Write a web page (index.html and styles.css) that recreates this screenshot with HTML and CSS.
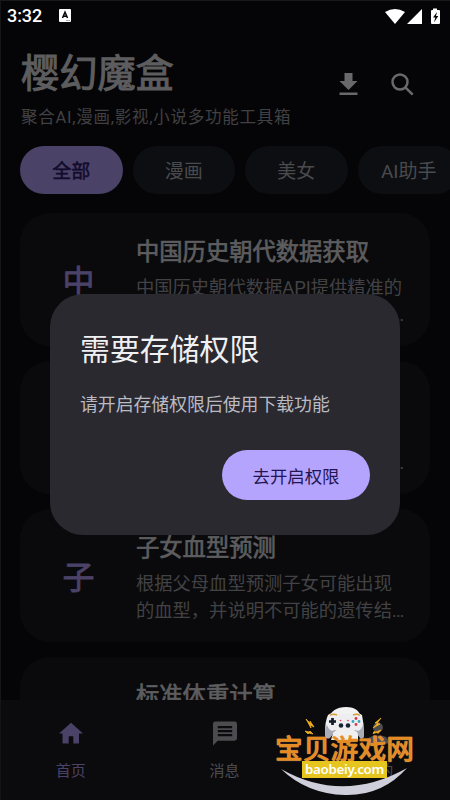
FILE: index.html
```html
<!DOCTYPE html>
<html lang="zh-CN">
<head>
<meta charset="utf-8">
<title>樱幻魔盒</title>
<link rel="stylesheet" href="styles.css">
</head>
<body>
<div class="screen">
  <div class="status">
    <span class="time">3:32</span>
    <svg class="ime" viewBox="0 0 12 13"><rect width="12" height="13" rx="1" fill="#fff"/><path d="M3.5 9 6 3.2 8.5 9M4.5 7.2h3" fill="none" stroke="#050507" stroke-width="1.5"/><path d="M7 11.5h4" stroke="#999" stroke-width=".8"/></svg>
    <svg class="signals" viewBox="0 0 58 18"><path d="M0 5Q10-1 20 5L10 17ZM22 17 37 2V17ZM48 1.500h4V3h2q1 0 1 1v12q0 1-1 1h-7q-1 0-1-1V4q0-1 1-1h1Z" fill="#fff"/><path d="M52 5 48 10.500h2.300L49 15.500 53.300 9H51Z" fill="#050507"/></svg>
  </div>
  <header class="header">
    <div>
      <h1 class="app-title">樱幻魔盒</h1>
      <p class="subtitle">聚合AI,漫画,影视,小说多功能工具箱</p>
    </div>
    <div class="actions">
      <svg viewBox="0 0 24 24"><path d="M7.500 0h8v7.900h5L11.500 17l-9-9.100h5ZM2.500 19.500h18v2.500h-18Z"/></svg>
      <svg viewBox="0 0 24 24"><circle cx="9" cy="9" r="7.500"/><path class="handle" d="m14.300 14.300 7.400 7.400"/></svg>
    </div>
  </header>
  <nav class="chips">
    <span class="chip active">全部</span><span class="chip">漫画</span><span class="chip">美女</span><span class="chip">AI助手</span>
  </nav>
  <main class="list">
    <article class="card">
      <div class="letter">中</div>
      <div class="info"><h2>中国历史朝代数据获取</h2><p>中国历史朝代数据API提供精准的</p><p class="more">…</p></div>
    </article>
    <article class="card">
      <div class="letter"></div>
      <div class="info"><h2>&nbsp;</h2><p>&nbsp;</p><p class="more">…</p></div>
    </article>
    <article class="card">
      <div class="letter">子</div>
      <div class="info"><h2>子女血型预测</h2><p>根据父母血型预测子女可能出现</p><p>的血型，并说明不可能的遗传结…</p></div>
    </article>
    <article class="card">
      <div class="letter"></div>
      <div class="info"><h2>标准体重计算</h2></div>
    </article>
  </main>
  <footer class="tabs">
    <div class="tab on"><svg viewBox="0 0 24 24"><path d="M9.700 22v-7.300h4.600V22h5.700V12h4L12 1.300 0 12h3.500v10Z"/></svg>首页</div>
    <div class="tab"><svg viewBox="0 0 24 24"><path fill-rule="evenodd" d="M0 2.400Q0 0 2.400 0h19.200Q24 0 24 2.400v14.400q0 2.400-2.400 2.400H4.800L0 24ZM4.800 4.400v2.300h14.400V4.400ZM4.800 8.400v2.300h14.400V8.400ZM4.800 12.400v2.300h14.400v-2.300Z"/></svg>消息</div>
    <div class="tab"><svg viewBox="0 0 24 24"><circle cx="12" cy="6" r="5"/><path d="M2 22v-3q0-5 10-5t10 5v3Z"/></svg>我的</div>
  </footer>

  <section class="dialog">
    <h3>需要存储权限</h3>
    <p>请开启存储权限后使用下载功能</p>
    <button>去开启权限</button>
  </section>

  <div class="watermark">
    <svg viewBox="0 0 170 100">
      <path d="M21 69Q83 104 147 68 122 96 85 95 47 94 21 69Z" fill="#cfcfdb"/>
      <path d="M68 19Q72 7 86 7t15 12Z" fill="#f3f2f2"/>
      <path d="M68 15Q71 12 77 14h16q6-2 9 1 2 9 2 19 0 5-4 3l-5-7H75l-5 7q-5 2-5-4 0-12 3-18Z" fill="#eeeef1"/>
      <path d="M65 34q0-6 2-9 3 8 8 5h20q5 3 8-5 1 6 1 10 0 5-4 3l-5-7H75l-5 7q-5 2-5-4Z" fill="#a9abb7"/>
      <path d="M73 33q2-3 4-3h16q3 0 5 4v6H71Z" fill="#f1f0f1"/>
      <path d="M70 15.500q3-2 7-.5M93 15q4-1.500 7 .5" stroke="#d89f35" stroke-width="1.500" fill="none"/>
      <path d="M72.500 18v7M69 21.500h7" stroke="#111a27" stroke-width="2.700"/>
      <circle cx="81" cy="25.500" r="2.300" fill="#172332"/><circle cx="88" cy="25.500" r="2.300" fill="#172332"/>
      <g fill="#da3549"><circle cx="96" cy="18.500" r="1.400"/><circle cx="96" cy="24.500" r="1.400"/><circle cx="80.500" cy="20.500" r=".8"/><circle cx="88" cy="20.500" r=".8"/></g>
      <g fill="#35a6bd"><circle cx="93" cy="21.500" r="1.400"/><circle cx="99" cy="21.500" r="1.400"/></g>
      <path d="m46 19 5 5-1-3 4 6-4-2 1 3ZM45 31l4 1 1-1 3 3-4-1-1 1ZM121 18l-6 5 3 0-5 5 7-4-3-.5ZM121 30l-5 2-2-.500-1 2 4-1 1 1Z" fill="#f0ae22" stroke="#f0ae22" stroke-width=".8"/>
    </svg>
    <strong class="brand">宝贝游戏网</strong>
    <span class="url">baobeiy.com</span>
  </div>
</div>
</body>
</html>
```
FILE: styles.css
```css
* { box-sizing: border-box; margin: 0; padding: 0; }
body { background: #050507; font-family: Roboto, "Noto Sans CJK SC", sans-serif; }
.screen { position: relative; display: flex; flex-direction: column; width: 450px; height: 800px; overflow: hidden; background: #050507; border-left: 1px solid #151518; border-top: 1px solid #17191b; }
.status { display: flex; align-items: center; height: 29px; padding: 0 8px 0 6px; color: #fff; }
.time { width: 52px; font-size: 18px; font-weight: 500; letter-spacing: -.1px; }
.ime { width: 12px; height: 13px; }
.signals { width: 58px; height: 18px; margin-left: auto; margin-right: -1px; }
.header { display: flex; justify-content: space-between; height: 116px; padding: 17px 35px 0 20px; }
.app-title { height: 54px; line-height: 54px; font-size: 38.200px; font-weight: 400; color: #5d5d5f; -webkit-text-stroke: 1px #5d5d5f; }
.subtitle { height: 34px; line-height: 34px; font-size: 16.500px; letter-spacing: .75px; color: #414144; }
.actions { display: flex; gap: 30px; padding-top: 26px; }
.actions svg { width: 24px; height: 24px; fill: #69696b; }
.actions circle, .actions .handle { fill: none; stroke: #69696b; stroke-width: 2.500; }
.chips { display: flex; flex: none; gap: 10px; margin-left: 19px; }
.chip { flex: none; width: 102.500px; height: 48px; line-height: 51px; border-radius: 24px; text-align: center; background: #0c0e12; color: #4a4a4d; font-size: 19px; }
.chip.active { background: #4b4267; color: #110b2d; -webkit-text-stroke: .5px #110b2d; }
.list { display: flex; flex: 1; min-height: 0; flex-direction: column; gap: 15.500px; margin: 19px 20px 0 19px; overflow: hidden; }
.card { display: flex; flex: none; height: 132.500px; border-radius: 30px; background: #0a0a0c; }
.letter { width: 116px; padding: 46px 0 0 1px; text-align: center; line-height: 46px; font-size: 32px; color: #4b4267; -webkit-text-stroke: .8px #4b4267; }
.info { width: 270px; padding-top: 22px; white-space: nowrap; }
.info h2 { height: 39px; line-height: 35px; font-size: 23.300px; font-weight: 400; color: #5d5d5f; -webkit-text-stroke: .7px #5d5d5f; }
.info p { height: 27px; line-height: 27px; font-size: 18.300px; color: #424245; }
.info .more { text-align: right; padding-right: 2px; }
.tabs { display: flex; flex: none; height: 100px; padding-top: 21px; margin: 0 -5px 0 -7px; background: #0b0b0d; color: #4c4c50; font-size: 15px; }
.tab { display: flex; flex: 1; flex-direction: column; align-items: center; gap: 14px; line-height: 22px; }
.tab svg { width: 24px; height: 25px; fill: currentColor; overflow: visible; }
.tab.on { color: #4b4267; }
.dialog { position: absolute; left: 49px; top: 293px; width: 350px; height: 241px; padding: 34px 30px 32px; display: flex; flex-direction: column; border-radius: 33px; background: #2a292f; }
.dialog h3 { line-height: 44px; font-size: 29.900px; font-weight: 400; color: #f0f0f3; }
.dialog p { margin-top: 19px; line-height: 27px; font-size: 17.850px; color: #bbbac3; }
.dialog button { align-self: flex-end; margin-top: 32px; width: 148px; height: 50px; border: 0; border-radius: 25px; background: #b5a4fe; color: #241552; font: 17.400px Roboto, "Noto Sans CJK SC", sans-serif; }
.watermark { position: absolute; left: 259px; top: 699px; width: 170px; height: 100px; }
.watermark svg { display: block; width: 170px; height: 100px; }
.brand { position: absolute; left: 15px; top: 27px; line-height: 40px; font-size: 27.800px; font-weight: 500; color: #e58b20; white-space: nowrap; font-family: "Noto Sans CJK SC", sans-serif; -webkit-text-stroke: .3px #e58b20; text-shadow: 0 0 1px #f7d7a8; }
.url { position: absolute; left: 42px; top: 61px; width: 85px; height: 17px; text-align: center; background: #e5c51e; color: #fff; font: 600 13.300px/16px "Noto Sans", sans-serif; letter-spacing: -.3px; }
```
